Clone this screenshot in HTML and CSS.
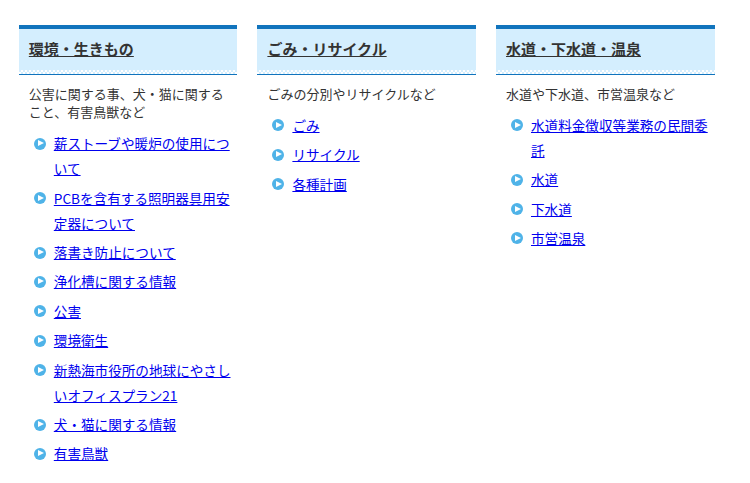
FILE: index.html
```html
<!DOCTYPE html>
<html lang="ja">
<head>
<meta charset="utf-8">
<title>環境</title>
<link rel="stylesheet" href="styles.css">
</head>
<body>
<div class="columns">
  <section class="col">
    <h2 class="head"><a href="#">環境・生きもの</a></h2>
    <p class="desc">公害に関する事、犬・猫に関すること、有害鳥獣など</p>
    <ul class="links">
      <li><a href="#">薪ストーブや暖炉の使用について</a></li>
      <li><a href="#">PCBを含有する照明器具用安定器について</a></li>
      <li><a href="#">落書き防止について</a></li>
      <li><a href="#">浄化槽に関する情報</a></li>
      <li><a href="#">公害</a></li>
      <li><a href="#">環境衛生</a></li>
      <li><a href="#">新熱海市役所の地球にやさしいオフィスプラン21</a></li>
      <li><a href="#">犬・猫に関する情報</a></li>
      <li><a href="#">有害鳥獣</a></li>
    </ul>
  </section>
  <section class="col">
    <h2 class="head"><a href="#">ごみ・リサイクル</a></h2>
    <p class="desc">ごみの分別やリサイクルなど</p>
    <ul class="links">
      <li><a href="#">ごみ</a></li>
      <li><a href="#">リサイクル</a></li>
      <li><a href="#">各種計画</a></li>
    </ul>
  </section>
  <section class="col">
    <h2 class="head"><a href="#">水道・下水道・温泉</a></h2>
    <p class="desc">水道や下水道、市営温泉など</p>
    <ul class="links">
      <li><a href="#">水道料金徴収等業務の民間委託</a></li>
      <li><a href="#">水道</a></li>
      <li><a href="#">下水道</a></li>
      <li><a href="#">市営温泉</a></li>
    </ul>
  </section>
</div>
</body>
</html>
```
FILE: styles.css
```css
html, body { margin: 0; padding: 0; background: #fff; }
body { font-family: "Noto Sans CJK JP", "Liberation Sans", sans-serif; color: #333; height: 483px; overflow: hidden; }
.columns { display: flex; gap: 20px; padding: 25px 0 0 18.8px; align-items: flex-start; }
.col { width: 218.6px; }
.head { margin: 0; height: 45px; padding: 0 10px; background: #d4eefe; border-top: 4px solid #1174bd; border-bottom: 1px solid #1174bd; font-size: 15px; line-height: 39px; font-weight: bold; position: relative; }
.head::after { content: ""; position: absolute; left: 0; right: 0; bottom: 0; height: 4px; background-image: conic-gradient(#fff 25%, #d4eefe 0 50%, #fff 0 75%, #d4eefe 0); background-size: 4px 4px; }
.head a { color: #333; }
.desc { margin: 9.7px 10px 0; line-height: 18.5px; font-size: 13px; }
.links { list-style: none; margin: 9.6px 0 0; padding: 0 0 0 35px; }
.links li { position: relative; line-height: 25px; font-size: 13.6px; margin-bottom: 4.4px; }
.links li::before { content: ""; position: absolute; left: -20px; top: 6.5px; width: 12px; height: 12px; border-radius: 50%; background: #4fb3e8; }
.links li::after { content: ""; position: absolute; left: -16px; top: 9px; border-left: 6px solid #fff; border-top: 3.5px solid transparent; border-bottom: 3.5px solid transparent; }
.links a { color: #00e; }
```
